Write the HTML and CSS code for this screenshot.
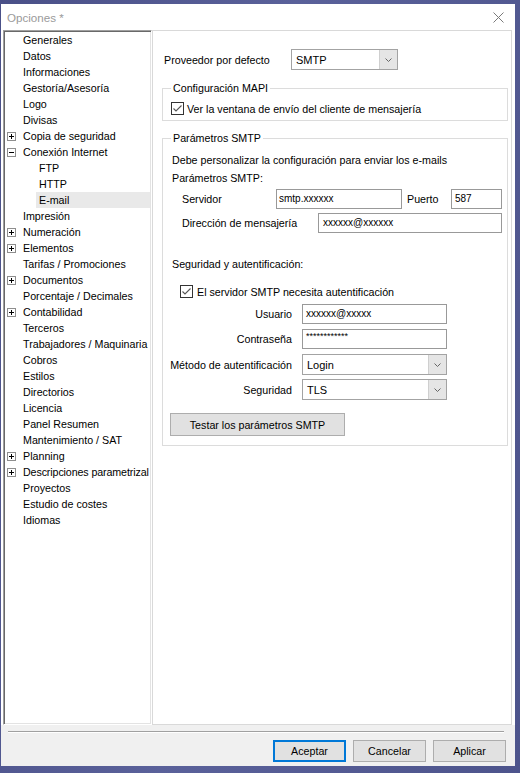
FILE: index.html
```html
<!DOCTYPE html>
<html lang="es">
<head>
<meta charset="utf-8">
<title>Opciones</title>
<link rel="stylesheet" href="styles.css">
</head>
<body>
<div class="window">
  <div class="titlebar">
    <span class="title">Opciones *</span>
    <svg class="close" width="11" height="11" viewBox="0 0 11 11"><path d="M0.5 0.5L10.5 10.5M10.5 0.5L0.5 10.5" stroke="#7a7a7a" stroke-width="1" fill="none"/></svg>
  </div>
  <div class="main">
    <div class="tree">
      <div class="node"><span class="tog"></span>Generales</div>
      <div class="node"><span class="tog"></span>Datos</div>
      <div class="node"><span class="tog"></span>Informaciones</div>
      <div class="node"><span class="tog"></span>Gestoría/Asesoría</div>
      <div class="node"><span class="tog"></span>Logo</div>
      <div class="node"><span class="tog"></span>Divisas</div>
      <div class="node"><svg class="tog" width="9" height="9" viewBox="0 0 9 9"><rect x="0.5" y="0.5" width="8" height="8" fill="#fff" stroke="#8e8e8e"/><path d="M2 4.5h5M4.5 2v5" stroke="#000"/></svg>Copia de seguridad</div>
      <div class="node"><svg class="tog" width="9" height="9" viewBox="0 0 9 9"><rect x="0.5" y="0.5" width="8" height="8" fill="#fff" stroke="#8e8e8e"/><path d="M2 4.5h5" stroke="#000"/></svg>Conexión Internet</div>
      <div class="node l2"><span class="lbl">FTP</span></div>
      <div class="node l2"><span class="lbl">HTTP</span></div>
      <div class="node l2"><span class="lbl sel">E-mail</span></div>
      <div class="node"><span class="tog"></span>Impresión</div>
      <div class="node"><svg class="tog" width="9" height="9" viewBox="0 0 9 9"><rect x="0.5" y="0.5" width="8" height="8" fill="#fff" stroke="#8e8e8e"/><path d="M2 4.5h5M4.5 2v5" stroke="#000"/></svg>Numeración</div>
      <div class="node"><svg class="tog" width="9" height="9" viewBox="0 0 9 9"><rect x="0.5" y="0.5" width="8" height="8" fill="#fff" stroke="#8e8e8e"/><path d="M2 4.5h5M4.5 2v5" stroke="#000"/></svg>Elementos</div>
      <div class="node"><span class="tog"></span>Tarifas / Promociones</div>
      <div class="node"><svg class="tog" width="9" height="9" viewBox="0 0 9 9"><rect x="0.5" y="0.5" width="8" height="8" fill="#fff" stroke="#8e8e8e"/><path d="M2 4.5h5M4.5 2v5" stroke="#000"/></svg>Documentos</div>
      <div class="node"><span class="tog"></span>Porcentaje / Decimales</div>
      <div class="node"><svg class="tog" width="9" height="9" viewBox="0 0 9 9"><rect x="0.5" y="0.5" width="8" height="8" fill="#fff" stroke="#8e8e8e"/><path d="M2 4.5h5M4.5 2v5" stroke="#000"/></svg>Contabilidad</div>
      <div class="node"><span class="tog"></span>Terceros</div>
      <div class="node"><span class="tog"></span>Trabajadores / Maquinaria</div>
      <div class="node"><span class="tog"></span>Cobros</div>
      <div class="node"><span class="tog"></span>Estilos</div>
      <div class="node"><span class="tog"></span>Directorios</div>
      <div class="node"><span class="tog"></span>Licencia</div>
      <div class="node"><span class="tog"></span>Panel Resumen</div>
      <div class="node"><span class="tog"></span>Mantenimiento / SAT</div>
      <div class="node"><svg class="tog" width="9" height="9" viewBox="0 0 9 9"><rect x="0.5" y="0.5" width="8" height="8" fill="#fff" stroke="#8e8e8e"/><path d="M2 4.5h5M4.5 2v5" stroke="#000"/></svg>Planning</div>
      <div class="node"><svg class="tog" width="9" height="9" viewBox="0 0 9 9"><rect x="0.5" y="0.5" width="8" height="8" fill="#fff" stroke="#8e8e8e"/><path d="M2 4.5h5M4.5 2v5" stroke="#000"/></svg><span class="tight">Descripciones parametrizal</span></div>
      <div class="node"><span class="tog"></span>Proyectos</div>
      <div class="node"><span class="tog"></span>Estudio de costes</div>
      <div class="node"><span class="tog"></span>Idiomas</div>
    </div>
    <div class="panel">
      <div class="prov-row">
        <span class="prov-lbl">Proveedor por defecto</span>
        <div class="combo w-prov"><span class="val">SMTP</span><span class="dd"><svg width="7" height="4" viewBox="0 0 7 4"><path d="M0.5 0.5L3.5 3.5L6.5 0.5" stroke="#666" fill="none"/></svg></span></div>
      </div>
      <fieldset class="grp grp-mapi">
        <legend>Configuración MAPI</legend>
        <div class="chk-row mapi-chk">
          <svg class="chk" width="13" height="13" viewBox="0 0 13 13"><rect x="0.5" y="0.5" width="12" height="12" fill="#fff" stroke="#333"/><path d="M2.5 6.5L5 9L10.5 3.5" stroke="#555" stroke-width="1.1" fill="none"/></svg>
          <span class="chk-lbl">Ver la ventana de envío del cliente de mensajería</span>
        </div>
      </fieldset>
      <fieldset class="grp grp-smtp">
        <legend>Parámetros SMTP</legend>
        <div class="smtp-body">
          <div class="line">Debe personalizar la configuración para enviar los e-mails</div>
          <div class="line l-second">Parámetros SMTP:</div>
          <div class="srv-row">
            <span class="lbl-srv">Servidor</span>
            <span class="inp w-srv">smtp.xxxxxx</span>
            <span class="lbl-port">Puerto</span>
            <span class="inp w-port">587</span>
          </div>
          <div class="dir-row">
            <span class="lbl-dir">Dirección de mensajería</span>
            <span class="inp w-dir">xxxxxx@xxxxxx</span>
          </div>
          <div class="line sec-title">Seguridad y autentificación:</div>
          <div class="chk-row auth-chk">
            <svg class="chk" width="13" height="13" viewBox="0 0 13 13"><rect x="0.5" y="0.5" width="12" height="12" fill="#fff" stroke="#333"/><path d="M2.5 6.5L5 9L10.5 3.5" stroke="#555" stroke-width="1.1" fill="none"/></svg>
            <span class="chk-lbl2">El servidor SMTP necesita autentificación</span>
          </div>
          <div class="frow fr-user">
            <span class="flbl">Usuario</span>
            <span class="inp w-f">xxxxxx@xxxxx</span>
          </div>
          <div class="frow fr-pass">
            <span class="flbl">Contraseña</span>
            <span class="inp w-f pass">************</span>
          </div>
          <div class="frow fr-met">
            <span class="flbl">Método de autentificación</span>
            <div class="combo w-f"><span class="val">Login</span><span class="dd"><svg width="7" height="4" viewBox="0 0 7 4"><path d="M0.5 0.5L3.5 3.5L6.5 0.5" stroke="#666" fill="none"/></svg></span></div>
          </div>
          <div class="frow fr-seg">
            <span class="flbl">Seguridad</span>
            <div class="combo w-f"><span class="val">TLS</span><span class="dd"><svg width="7" height="4" viewBox="0 0 7 4"><path d="M0.5 0.5L3.5 3.5L6.5 0.5" stroke="#666" fill="none"/></svg></span></div>
          </div>
          <div class="btn test-btn">Testar los parámetros SMTP</div>
        </div>
      </fieldset>
    </div>
  </div>
  <div class="footer">
    <div class="sep"></div>
    <div class="buttons">
      <div class="btn fbtn default">Aceptar</div>
      <div class="btn fbtn">Cancelar</div>
      <div class="btn fbtn">Aplicar</div>
    </div>
  </div>
</div>
</body>
</html>
```

FILE: styles.css
```css
html, body {
  margin: 0;
  padding: 0;
}
body {
  width: 520px;
  height: 773px;
  overflow: hidden;
  background: linear-gradient(100deg, #4a5088 0%, #5a619a 45%, #4d548c 100%);
  font-family: "Liberation Sans", Arial, sans-serif;
  font-size: 10.7px;
  color: #000;
}
.window {
  margin: 4px 0 0 1px;
  width: 514px;
  height: 762px;
  background: #f0f0f0;
  display: flex;
  flex-direction: column;
}
.titlebar {
  height: 26px;
  flex: none;
  background: #fff;
  display: flex;
  align-items: center;
  justify-content: space-between;
  padding: 0 11px 0 6px;
}
.title {
  font-size: 11.6px;
  color: #9a9a9a;
}
.close {
  display: block;
}
.main {
  height: 695px;
  flex: none;
  display: flex;
  padding-left: 2px;
  background: #fff;
}
.tree {
  width: 149px;
  flex: none;
  box-sizing: border-box;
  border-style: solid;
  border-width: 1px;
  border-color: #a0a0a0 #ffffff #ffffff #a0a0a0;
  box-shadow: inset 1px 1px 0 #696969, inset -1px -1px 0 #e3e3e3;
  background: #fff;
  padding-top: 1px;
  overflow: hidden;
}
.node {
  height: 16px;
  display: flex;
  align-items: center;
  white-space: nowrap;
  padding-left: 3px;
}
.tight {
  letter-spacing: -0.12px;
}
.tog {
  display: block;
  width: 9px;
  height: 9px;
  margin-right: 7px;
  flex: none;
}
.node.l2 {
  padding-left: 32px;
}
.lbl {
  align-self: stretch;
  flex: 1;
  display: flex;
  align-items: center;
  padding-left: 3px;
}
.lbl.sel {
  background: #e9e9e9;
  margin-right: 1px;
}
.panel {
  width: 360px;
  flex: none;
  box-sizing: border-box;
  background: #fff;
  border: 1px solid #d9d9d9;
  padding: 18px 0 0 9px;
}
.prov-row {
  display: flex;
  align-items: center;
  height: 21px;
}
.prov-lbl {
  margin-left: 2px;
  width: 127px;
}
.combo {
  box-sizing: border-box;
  height: 21px;
  border: 1px solid #a3a3a3;
  background: #fff;
  display: flex;
  align-items: stretch;
}
.combo .val {
  flex: 1;
  display: flex;
  align-items: center;
  padding-left: 4px;
  font-size: 11px;
}
.combo .dd {
  width: 17px;
  background: #e5e5e5;
  border-left: 1px solid #cfcfcf;
  display: flex;
  align-items: center;
  justify-content: center;
}
.combo .dd svg {
  display: block;
}
.w-prov {
  width: 107px;
}
.grp {
  box-sizing: border-box;
  width: 346px;
  margin: 0;
  border: 1px solid #dcdcdc;
  min-width: 0;
}
.grp legend {
  padding: 0 2px;
  line-height: 14px;
}
.grp-mapi {
  margin-top: 11px;
  padding: 7px 0 5px 8px;
}
.grp-mapi legend {
  margin-left: 0;
}
.grp-smtp {
  margin-top: 10px;
  padding: 7px 0 9px 9px;
}
.grp-smtp legend {
  margin-left: -1px;
}
.chk-row {
  display: flex;
  align-items: center;
  height: 13px;
}
.chk {
  display: block;
  flex: none;
}
.chk-lbl {
  margin-left: 3px;
}
.line {
  line-height: 16px;
  white-space: nowrap;
}
.l-second {
  margin-top: 2px;
}
.inp {
  box-sizing: border-box;
  height: 20px;
  border: 1px solid #999;
  background: #fff;
  font-size: 10px;
  line-height: 17px;
  padding-left: 2px;
  white-space: nowrap;
  overflow: hidden;
}
.srv-row {
  margin-top: 3px;
  display: flex;
  align-items: center;
  height: 20px;
}
.lbl-srv {
  margin-left: 10px;
  width: 94px;
}
.w-srv {
  width: 126px;
}
.lbl-port {
  margin-left: 5px;
  width: 44px;
}
.w-port {
  width: 51px;
  padding-left: 3px;
}
.dir-row {
  margin-top: 4px;
  display: flex;
  align-items: center;
  height: 20px;
}
.lbl-dir {
  margin-left: 10px;
  width: 136px;
}
.w-dir {
  width: 184px;
  padding-left: 4px;
}
.sec-title {
  margin-top: 23px;
}
.auth-chk {
  margin-top: 13px;
  margin-left: 8px;
}
.chk-lbl2 {
  margin-left: 4px;
}
.frow {
  display: flex;
  align-items: center;
  margin-left: -4px;
}
.flbl {
  width: 124px;
  text-align: right;
  margin-right: 10px;
  white-space: nowrap;
}
.w-f {
  width: 145px;
  padding-left: 3px;
}
.combo.w-f {
  padding-left: 0;
}
.pass {
  font-size: 9px;
  line-height: 13px;
}
.fr-user {
  margin-top: 6px;
}
.fr-pass {
  margin-top: 5px;
}
.fr-met {
  margin-top: 5px;
}
.fr-seg {
  margin-top: 4px;
}
.btn {
  box-sizing: border-box;
  background: #e1e1e1;
  border: 1px solid #adadad;
  display: flex;
  align-items: center;
  justify-content: center;
  white-space: nowrap;
}
.test-btn {
  margin-top: 13px;
  margin-left: -2px;
  width: 175px;
  height: 23px;
}
.footer {
  height: 41px;
  flex: none;
  box-sizing: border-box;
  padding-top: 6px;
}
.sep {
  margin: 0 11px 0 7px;
  height: 0;
  border-top: 1px solid #a0a0a0;
  border-bottom: 1px solid #ffffff;
}
.buttons {
  margin-top: 7px;
  display: flex;
  justify-content: flex-end;
  gap: 7px;
  padding-right: 9px;
}
.fbtn {
  width: 73px;
  height: 22px;
}
.fbtn.default {
  border: 2px solid #0078d7;
}
```
